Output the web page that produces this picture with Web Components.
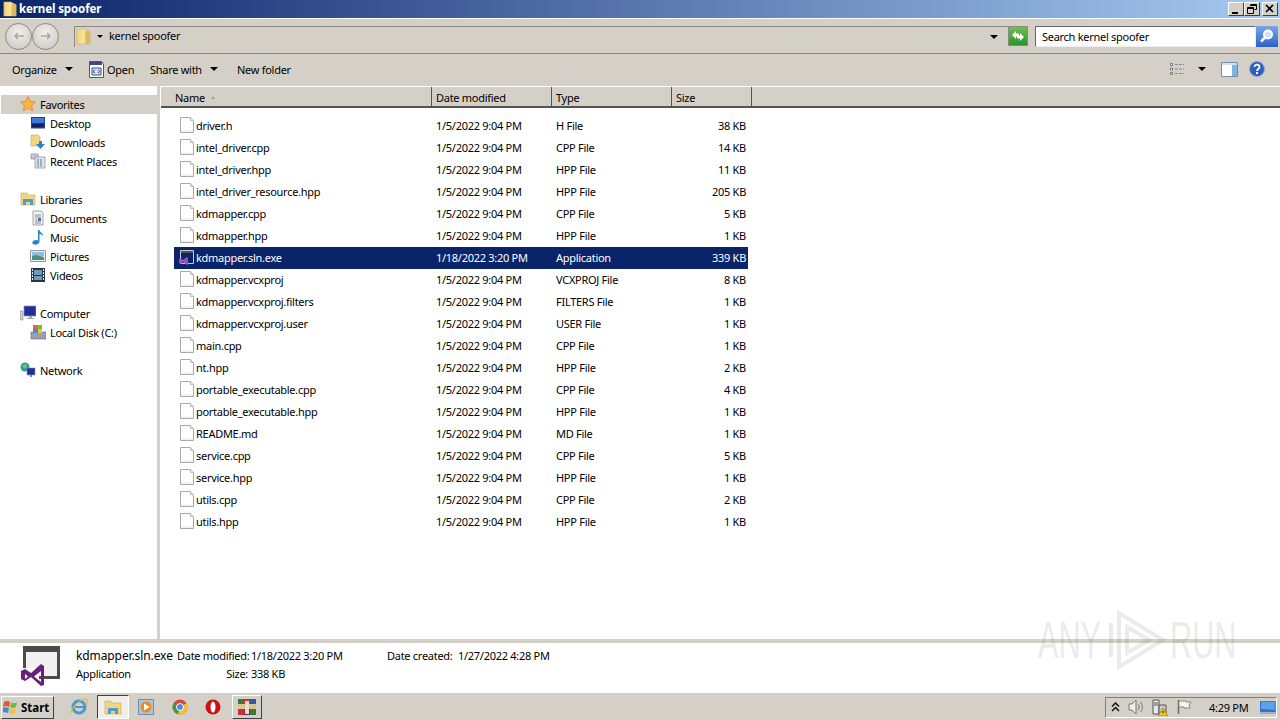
<!DOCTYPE html>
<html>
<head>
<meta charset="utf-8">
<title>kernel spoofer</title>
<style>
  html, body { margin: 0; height: 100%; overflow: hidden; }
  body { font: 11px "Noto Sans", sans-serif; color: #000; background: #fff; }
  win-explorer { width: 1280px; height: 720px; }
</style>
</head>
<body>
<svg width="0" height="0" style="position:absolute">
  <defs>
    <linearGradient id="fold" x1="0" x2="1"><stop offset="0" stop-color="#f0d070"/><stop offset=".5" stop-color="#f7e6a0"/><stop offset="1" stop-color="#d8b050"/></linearGradient>
    <symbol id="folder" viewBox="0 0 16 18">
      <path d="M1 1h8l6 3v13H1z" fill="url(#fold)" stroke="#d4b660" stroke-width=".6"/>
      <path d="M10 4l5 0v13h-5z" fill="#dcb95c"/>
    </symbol>
    <symbol id="doc" viewBox="0 0 16 16">
      <path d="M1.500 .5h10l3 3v12h-13z" fill="#fff" stroke="#a9a9a9"/>
      <path d="M11.500 .5v3h3" fill="#eee" stroke="#bdbdbd"/>
      <path d="M2 13.500h12v1.500H2z" fill="#f0f0f0"/>
    </symbol>
    <symbol id="vs" viewBox="0 0 40 40">
      <path d="M3 0h37v33H19v-3h18V6H6v16H3z" fill="#4b4b4b"/>
      <path d="M6 6h31v24H19V22H6z" fill="#f1f1f1"/>
      <path d="M1 25l4-2 6 4 10-9 3 2v19l-3 1-10-9-6 4-4-2zM5 28v5l3-2.500zM21 25l-7 5.500 7 5.500z" fill="#68217a" fill-rule="evenodd"/>
    </symbol>
  </defs>
</svg>

<win-explorer></win-explorer>

<script>
// every icon gets its own small svg, the symbols above are only reachable by copying them in
const defsHtml = document.querySelector("svg defs").outerHTML;
const useIcon = (id, w, h) =>
  `<svg width="${w}" height="${h || w}">${defsHtml}<use href="#${id}" width="${w}" height="${h || w}"/></svg>`;

const navIcons = {
  star: `<svg width="16" height="16" viewBox="0 0 16 16"><path d="M8 .5l2.300 4.800 5.200.7-3.800 3.600.9 5.200L8 12.300l-4.600 2.500.9-5.200L.5 6l5.200-.7z" fill="#f6b73c" stroke="#e8894a"/></svg>`,
  desktop: `<svg width="16" height="16" viewBox="0 0 16 16"><path d="M1 2h14v11H1z" fill="#1d3f9e"/><path d="M2 3h12v6L2 8z" fill="#3f78d8"/><path d="M2 9l12-1v4H2z" fill="#14235f"/><path d="M1 13h14v1H1z" fill="#9aa4b8"/></svg>`,
  downloads: `<svg width="16" height="16" viewBox="0 0 16 16"><path d="M1 1h7l2 2v9H1z" fill="#f0d67c" stroke="#c9a94c" stroke-width=".6"/><path d="M9 7h3v3h3l-4.500 5L6 10h3z" fill="#2f7fd0"/></svg>`,
  recent: `<svg width="16" height="16" viewBox="0 0 16 16"><path d="M1 1h7v5H1z" fill="#c5ced8" stroke="#7d8a98" stroke-width=".7"/><path d="M5 4h10v11H5z" fill="#dfe4ea" stroke="#7d8a98" stroke-width=".7"/><path d="M7 7h6M7 9h6M7 11h6M7 13h6" stroke="#5d7f9c" stroke-dasharray="2 1"/></svg>`,
  libraries: `<svg width="16" height="16" viewBox="0 0 16 16"><path d="M1 2h6l1 2h7v10H1z" fill="#efd67e" stroke="#c9a94c" stroke-width=".6"/><path d="M3 8h10v6h-3v-3H6v3H3z" fill="#4d9bd0"/></svg>`,
  documents: `<svg width="16" height="16" viewBox="0 0 16 16"><path d="M3 1h8l2 2v12H3z" fill="#f3f3f3" stroke="#8d8d8d" stroke-width=".8"/><path d="M5 5h6M5 7h6M5 9h2M5 11h6M5 13h6" stroke="#8a8a8a"/><path d="M8 8h3v3H8z" fill="#4c6f96"/></svg>`,
  music: `<svg width="16" height="16" viewBox="0 0 16 16"><path d="M8 1h1.500c.5 3 4 3 3.500 6-1-1.500-2.500-2-3.500-2v7.500C9.500 15 6.500 16 4 15.500 1.500 15 2 12 4.500 11.200c1.500-.4 2.500-.2 3.500.3z" fill="#2f7fd0"/></svg>`,
  pictures: `<svg width="16" height="16" viewBox="0 0 16 16"><path d="M.5 2.500h15v11H.5z" fill="#e8eef2" stroke="#8f9aa5"/><path d="M2 4h12v4H2z" fill="#8cc0e6"/><path d="M2 8l4-1 8 2v3H2z" fill="#4f8f78"/></svg>`,
  videos: `<svg width="16" height="16" viewBox="0 0 16 16"><path d="M1 1h14v14H1z" fill="#2d3540"/><path d="M4 3h8v10H4z" fill="#6f9cbc"/><path d="M2 2h1v2H2zM2 5h1v2H2zM2 8h1v2H2zM2 11h1v2H2zM13 2h1v2h-1zM13 5h1v2h-1zM13 8h1v2h-1zM13 11h1v2h-1z" fill="#e8e8e8"/><path d="M4 8h8v1H4z" fill="#2d3540"/></svg>`,
  computer: `<svg width="16" height="16" viewBox="0 0 16 16"><path d="M0 6h3v9H0z" fill="#c9ccd0" stroke="#7c7f85" stroke-width=".5"/><path d="M4 1h12v10H4z" fill="#1f2f9e" stroke="#8f97a5" stroke-width=".7"/><path d="M9 11h3v2h2v1H7v-1h2z" fill="#a5a9b0"/></svg>`,
  disk: `<svg width="16" height="16" viewBox="0 0 16 16"><path d="M1 8h15v7H1z" fill="#9aa1aa" stroke="#62676f" stroke-width=".6"/><path d="M3 1h5v7H3z" fill="#e86a33"/><path d="M8 1h4v4H8z" fill="#7cb83c"/><path d="M3 5h5v4H3z" fill="#3a8ee0"/><path d="M8 5h4v4H8z" fill="#f3c534"/></svg>`,
  network: `<svg width="16" height="16" viewBox="0 0 16 16"><circle cx="5" cy="5" r="4.500" fill="#2a9c9c"/><path d="M2 3l4-1 1 3-3 2z" fill="#7cc06a"/><path d="M7 6h8v7H7z" fill="#1f2fa0" stroke="#8f97a5" stroke-width=".6"/><path d="M10 13h2v2h-2z" fill="#7d8a98"/></svg>`
};

const trayAndTaskIcons = {
  start: `<svg width="17" height="16" viewBox="0 0 17 16"><path d="M1 3c2-1.500 4-1.500 6 0L6 8C4 6.800 2.500 6.800 0 8z" fill="#e2582b"/><path d="M8 3.500c2 1 4 1 6-.5l-1 5c-2 1.300-4 1.300-6 .2z" fill="#7cb83c"/><path d="M0 9c2-1 4-1 6 0l-1 5c-2-1-4-1-6 0z" fill="#3a8ee0"/><path d="M7 9.500c2 1 4 1 6 0l-1 5c-2 1-4 1-6 0z" fill="#f3c534"/></svg>`,
  ie: `<svg width="18" height="18" viewBox="0 0 18 18"><circle cx="9" cy="9" r="6" fill="none" stroke="#3f9ad8" stroke-width="3"/><path d="M5 9h9" stroke="#3f9ad8" stroke-width="2"/><path d="M1 15C2 9 9 2 16 1c2 1 1 4 0 6" fill="none" stroke="#e8b23c" stroke-width="1.200"/></svg>`,
  explorer: `<svg width="18" height="16" viewBox="0 0 18 16"><path d="M1 2h6l1 2h9v11H1z" fill="#efd67e" stroke="#c9a94c" stroke-width=".6"/><path d="M4 9h10v6h-3v-3H7v3H4z" fill="#4d9bd0"/></svg>`,
  media: `<svg width="16" height="16" viewBox="0 0 16 16"><path d="M.5.500h15v15H.5z" fill="#a8c4de" stroke="#6c8fb3"/><circle cx="8" cy="8" r="5.500" fill="#f08a1c"/><path d="M6 4.500L11.500 8 6 11.500z" fill="#fff"/></svg>`,
  chrome: `<svg width="16" height="16" viewBox="0 0 16 16"><circle cx="8" cy="8" r="7.500" fill="#d9493b"/><path d="M8 8L1.500 4.300A7.500 7.500 0 0 0 6 15.200z" fill="#3f9b4a"/><path d="M8 8l-2 7.200A7.500 7.500 0 0 0 15.500 8 7 7 0 0 0 14.500 4.300z" fill="#f2c230"/><circle cx="8" cy="8" r="3.500" fill="#4a8ae8" stroke="#fff"/></svg>`,
  opera: `<svg width="16" height="16" viewBox="0 0 16 16"><ellipse cx="8" cy="8" rx="7.500" ry="7.500" fill="#cc0f16"/><ellipse cx="8" cy="8" rx="2.500" ry="5.500" fill="#fff"/></svg>`,
  rar: `<svg width="20" height="18" viewBox="0 0 20 18"><path d="M1 1h18v16H1z" fill="#7a2070"/><path d="M1 1h6v5H1z" fill="#3a7a3c"/><path d="M7 1h6v5H7z" fill="#c4362e"/><path d="M13 1h6v5h-6z" fill="#3456a8"/><path d="M1 11h6v6H1z" fill="#c4362e"/><path d="M13 11h6v6h-6z" fill="#3a7a3c"/><path d="M1 6h18v5H1z" fill="#d8c890"/><path d="M8 3h4v13H8z" fill="#e8e0c0"/></svg>`,
  chevrons: `<svg width="9" height="10" viewBox="0 0 9 10"><path d="M1 4.500L4.500 1 8 4.500M1 9L4.500 5.500 8 9" fill="none" stroke="#111" stroke-width="1.500"/></svg>`,
  speaker: `<svg width="17" height="16" viewBox="0 0 17 16"><path d="M1 5h3l4-4v14l-4-4H1z" fill="#eee" stroke="#777"/><path d="M10 5c1.500 2 1.500 4 0 6M12.500 3c2.500 3 2.500 7 0 10" fill="none" stroke="#777"/></svg>`,
  power: `<svg width="16" height="17" viewBox="0 0 16 17"><path d="M1 1h6v14H1z" fill="#e8e8e8" stroke="#555"/><path d="M3 3v4M5 3v4" stroke="#555"/><path d="M7 6h7v9H7z" fill="#c8ccd0" stroke="#555"/><path d="M11 9l5 8H6z" fill="#f5c518" stroke="#8a6d00" stroke-width=".6"/><path d="M11 12v2" stroke="#000"/></svg>`,
  flag: `<svg width="16" height="16" viewBox="0 0 16 16"><path d="M2.500 1v14" stroke="#666" stroke-width="1.400"/><path d="M3 2h7v1h5l-2 3 1 3H8V8H3z" fill="#f4f4f4" stroke="#888"/></svg>`,
  desktopBtn: `<svg width="16" height="13" viewBox="0 0 16 13"><path d="M0 0h16v13H0z" fill="#2f6fd0"/><path d="M1 1h14v8L1 8z" fill="#5aa2ea"/><path d="M0 11h16v2H0z" fill="#a8b4c0"/></svg>`
};

class WinTitlebar extends HTMLElement {
  constructor() {
    super();
    this.attachShadow({ mode: "open" });
    this.shadowRoot.innerHTML = `
    <style>
      :host { display: flex; align-items: center; height: 18px; background: linear-gradient(90deg, #0a246a, #a6caf0); }
      .ico { margin: 0 2px 0 3px; display: flex; }
      .name { flex: 1; color: #fff; font: bold 11.500px "Noto Sans", sans-serif; letter-spacing: -.1px; padding-bottom: 2px; }
      .btns { display: flex; margin-right: 2px; }
      .btn { width: 16px; height: 14px; background: #d4d0c8; box-sizing: border-box; border: 1px solid; border-color: #fff #404040 #404040 #fff; display: flex; align-items: center; justify-content: center; }
      .btn.close { margin-left: 2px; }
    </style>
    <div class="ico">${useIcon("folder", 14, 16)}</div>
    <div class="name"><slot></slot></div>
    <div class="btns">
      <div class="btn"><svg width="10" height="10"><path d="M1 8h6v2H1z"/></svg></div>
      <div class="btn"><svg width="10" height="10"><path d="M3.500.5h6v5h-2M.5 3.500h6v6h-6z M3 1.500h6M1 4.500h5" fill="none" stroke="#000"/></svg></div>
      <div class="btn close"><svg width="10" height="10"><path d="M1 1l7 7M8 1L1 8" stroke="#000" stroke-width="1.600"/></svg></div>
    </div>`;
  }
}

class WinAddressbar extends HTMLElement {
  constructor() {
    super();
    this.attachShadow({ mode: "open" });
    this.shadowRoot.innerHTML = `
    <style>
      :host { display: flex; align-items: center; height: 36px; box-sizing: border-box; background: #d4d0c8; border-top: 1px solid #fff; border-bottom: 1px solid #88857c; padding: 0 2px 0 5px; }
      .nav { display: flex; }
      .round { width: 27px; height: 27px; box-sizing: border-box; border-radius: 50%; border: 1px solid #8a8880; background: radial-gradient(circle at 50% 35%, #f2f0ec, #c8c5bd); display: flex; align-items: center; justify-content: center; }
      .path { flex: 1; margin-left: 15px; height: 21px; display: flex; align-items: center; background: #d4d0c8; border-left: 1px solid #8a8880; border-top: 1px solid #8a8880; box-sizing: border-box; }
      .path .f { margin: 0 6px 0 1px; display: flex; }
      .caret { width: 0; height: 0; border: 3px solid transparent; border-top: 3px solid #000; border-bottom: 0; }
      .text { margin-left: 6px; flex: 1; padding-bottom: 3px; }
      .drop { width: 0; height: 0; border: 4px solid transparent; border-top: 4px solid #000; border-bottom: 0; margin-right: 10px; }
      .go { width: 20px; height: 20px; box-sizing: border-box; background: linear-gradient(#6cc04e, #2f9130); border: 1px solid #8a8880; display: flex; align-items: center; justify-content: center; margin-right: 7px; }
      .search { width: 221px; height: 21px; box-sizing: border-box; background: #fff; border: 1px solid; border-color: #666 #eee #eee #666; padding-left: 6px; line-height: 19px; }
      .mag { width: 22px; height: 21px; background: linear-gradient(#7da4ea, #2b62c8); display: flex; align-items: center; justify-content: center; }
    </style>
    <div class="nav">
      <div class="round"><svg width="12" height="10"><path d="M11 5H2M5 2L2 5l3 3" fill="none" stroke="#aaa79f" stroke-width="1.500"/></svg></div>
      <div class="round"><svg width="12" height="10"><path d="M1 5h9M7 2l3 3-3 3" fill="none" stroke="#aaa79f" stroke-width="1.500"/></svg></div>
    </div>
    <div class="path">
      <div class="f">${useIcon("folder", 15, 17)}</div>
      <div class="caret"></div>
      <div class="text"><slot></slot></div>
      <div class="drop"></div>
    </div>
    <div class="go"><svg width="14" height="12"><path d="M1 5l4-4v2.500h3v3H5V9zM13 7l-4 4V8.500H6v-3h3V3z" fill="#fff"/></svg></div>
    <div class="search"><slot name="search"></slot></div>
    <div class="mag"><svg width="16" height="16"><circle cx="9" cy="6.500" r="4" fill="#cfe0fa" stroke="#fff" stroke-width="2"/><path d="M6 9.500l-4 4" stroke="#fff" stroke-width="2.500"/></svg></div>`;
  }
}

class WinCommandbar extends HTMLElement {
  constructor() {
    super();
    this.attachShadow({ mode: "open" });
    this.shadowRoot.innerHTML = `
    <style>
      :host { display: flex; align-items: center; height: 32px; background: #d4d0c8; padding: 0 0 2px 12px; box-sizing: border-box; }
      .item { display: flex; align-items: center; }
      .caret { width: 0; height: 0; border: 4px solid transparent; border-top: 4px solid #000; border-bottom: 0; }
      .organize { width: 77px; } .organize .caret { margin-left: 8px; }
      .open { width: 61px; } .open svg { margin-right: 3px; }
      .share { width: 87px; } .share .caret { margin-left: 8px; }
      .grow { flex: 1; }
      .views { margin-right: 13px; display: flex; }
      .vc { margin-right: 15px; }
      .pane { margin-right: 11px; display: flex; }
      .help { margin-right: 15px; display: flex; }
    </style>
    <div class="item organize">Organize<span class="caret"></span></div>
    <div class="item open">
      <svg width="15" height="17" viewBox="0 0 15 17"><path d="M.5.500h12l2 2v14H.5z" fill="#fff" stroke="#555"/><path d="M1 1h12v3H1z" fill="#3c4a90"/><path d="M3 7h9v7H3z" fill="#d8dde8" stroke="#3c4a90"/><path d="M6 9l-2 1.500L6 12M9 9l2 1.500L9 12" fill="none" stroke="#3c4a90"/></svg>
      Open
    </div>
    <div class="item share">Share with<span class="caret"></span></div>
    <div class="item">New folder</div>
    <div class="grow"></div>
    <div class="views"><svg width="16" height="14" viewBox="0 0 16 14"><path d="M1.500 1.500h2v2h-2zM1.500 6h2v2h-2zM1.500 10.500h2v2h-2z" fill="#fff" stroke="#777"/><path d="M6 2.500h9M6 7h9M6 11.500h9" stroke="#8a8a8a" stroke-dasharray="3 1"/></svg></div>
    <div class="caret vc"></div>
    <div class="pane"><svg width="17" height="15" viewBox="0 0 17 15"><path d="M.5.500h16v14H.5z" fill="#fff" stroke="#6d8fb0"/><path d="M11 1h5v13h-5z" fill="#7fb4dc"/><path d="M1 1h15v2H1z" fill="#cfe0ee"/></svg></div>
    <div class="help"><svg width="16" height="16" viewBox="0 0 16 16"><circle cx="8" cy="8" r="7.500" fill="#2f5fb8" stroke="#8aa4d4"/><path d="M5.500 6c0-3.500 5.500-3 5 .2C10.300 8 8 8 8 10" fill="none" stroke="#fff" stroke-width="1.800"/><path d="M7 11h2v2H7z" fill="#fff"/></svg></div>`;
  }
}

class NavItem extends HTMLElement {
  constructor() {
    super();
    this.attachShadow({ mode: "open" });
    this.shadowRoot.innerHTML = `
    <style>
      :host { display: flex; align-items: center; height: 19px; box-sizing: border-box; padding: 0 0 1px 30px; }
      :host([top]) { padding-left: 20px; }
      :host([on]) { background: #d4d0c8; margin-left: 1px; padding-left: 19px; }
      .i { width: 16px; height: 16px; margin-right: 4px; display: flex; }
    </style>
    <div class="i"></div><slot></slot>`;
  }
  connectedCallback() {
    this.shadowRoot.querySelector(".i").innerHTML = navIcons[this.getAttribute("icon")] || "";
  }
}

class NavPane extends HTMLElement {
  constructor() {
    super();
    this.attachShadow({ mode: "open" });
    this.shadowRoot.innerHTML = `
    <style>
      :host { display: block; width: 157px; background: #fff; padding-top: 9px; box-sizing: border-box; }
    </style>
    <slot></slot>`;
  }
}

class ColHead extends HTMLElement {
  constructor() {
    super();
    this.attachShadow({ mode: "open" });
    this.shadowRoot.innerHTML = `
    <style>
      :host { display: flex; align-items: center; box-sizing: border-box; height: 100%; padding: 2px 0 0 4px; border-right: 1px solid #55534e; }
      :host([first]) { padding-left: 14px; }
      .sort { margin-left: 6px; width: 0; height: 0; border: 2.500px solid transparent; border-bottom: 3px solid #a8a59c; border-top: 0; display: none; }
      :host([sorted]) .sort { display: block; }
    </style>
    <slot></slot><span class="sort"></span>`;
  }
}

class FileRow extends HTMLElement {
  constructor() {
    super();
    this.attachShadow({ mode: "open" });
    this.shadowRoot.innerHTML = `
    <style>
      :host { display: grid; grid-template-columns: 262px 120px 120px 70px; width: 574px; height: 22px; margin-left: 13px; align-items: center; color: #000; padding: 0 4px 2px 0; box-sizing: border-box; }
      :host([selected]) { background: #0a246a; color: #fff; }
      .name { display: flex; align-items: center; }
      .i { width: 16px; height: 16px; margin: 0 1px 0 5px; display: flex; }
      .size { text-align: right; }
    </style>
    <div class="name"><div class="i"></div><span id="n"></span></div>
    <div id="d"></div><div id="t"></div><div id="s" class="size"></div>`;
  }
  connectedCallback() {
    const root = this.shadowRoot;
    root.getElementById("n").textContent = this.getAttribute("name");
    root.getElementById("d").textContent = this.getAttribute("date");
    root.getElementById("t").textContent = this.getAttribute("type");
    root.getElementById("s").textContent = this.getAttribute("size");
    root.querySelector(".i").innerHTML = this.hasAttribute("selected")
      ? `<svg width="16" height="16" viewBox="0 0 16 16"><path d="M1.500 1.500h13v13h-13z" fill="#0a246a" stroke="#c8c8c8"/><path d="M2 2h12v2H2z" fill="#555"/><path d="M0 10l2-1 2 2 4-3 1 1v6l-1 1-4-3-2 2-2-1z" fill="#a04fc0"/></svg>`
      : useIcon("doc", 16);
  }
}

const files = [
  ["driver.h", "H File", "38 KB"],
  ["intel_driver.cpp", "CPP File", "14 KB"],
  ["intel_driver.hpp", "HPP File", "11 KB"],
  ["intel_driver_resource.hpp", "HPP File", "205 KB"],
  ["kdmapper.cpp", "CPP File", "5 KB"],
  ["kdmapper.hpp", "HPP File", "1 KB"],
  ["kdmapper.sln.exe", "Application", "339 KB", "1/18/2022 3:20 PM"],
  ["kdmapper.vcxproj", "VCXPROJ File", "8 KB"],
  ["kdmapper.vcxproj.filters", "FILTERS File", "1 KB"],
  ["kdmapper.vcxproj.user", "USER File", "1 KB"],
  ["main.cpp", "CPP File", "1 KB"],
  ["nt.hpp", "HPP File", "2 KB"],
  ["portable_executable.cpp", "CPP File", "4 KB"],
  ["portable_executable.hpp", "HPP File", "1 KB"],
  ["README.md", "MD File", "1 KB"],
  ["service.cpp", "CPP File", "5 KB"],
  ["service.hpp", "HPP File", "1 KB"],
  ["utils.cpp", "CPP File", "2 KB"],
  ["utils.hpp", "HPP File", "1 KB"]
];

class FileList extends HTMLElement {
  constructor() {
    super();
    this.attachShadow({ mode: "open" });
    const rows = files.map(f =>
      `<file-row name="${f[0]}" type="${f[1]}" size="${f[2]}" date="${f[3] || "1/5/2022 9:04 PM"}"${f[3] ? " selected" : ""}></file-row>`
    ).join("");
    this.shadowRoot.innerHTML = `
    <style>
      :host { display: block; flex: 1; background: #fff; border-left: 1px solid #fff; }
      .head { display: grid; grid-template-columns: 271px 120px 120px 80px 1fr; height: 22px; background: #d4d0c8; border-top: 1px solid #fff; border-bottom: 2px solid #55534e; box-sizing: border-box; }
      .rows { padding-top: 7px; }
    </style>
    <div class="head">
      <col-head first sorted>Name</col-head>
      <col-head>Date modified</col-head>
      <col-head>Type</col-head>
      <col-head>Size</col-head>
      <div></div>
    </div>
    <div class="rows">${rows}</div>`;
  }
}

class DetailsPane extends HTMLElement {
  constructor() {
    super();
    this.attachShadow({ mode: "open" });
    this.shadowRoot.innerHTML = `
    <style>
      :host { display: flex; height: 49px; box-sizing: border-box; background: #fff; padding: 3px 0 0 20px; }
      .big { width: 40px; height: 40px; margin-right: 16px; }
      .info { display: grid; grid-template-columns: 101px 74px 136px 71px 1fr; grid-auto-rows: 19px 16px; align-items: center; flex: 1; }
      .name { font-size: 12px; letter-spacing: -.1px; }
      .k { white-space: nowrap; }
      .r { text-align: right; padding-right: 3px; }
    </style>
    <div class="big">${useIcon("vs", 40)}</div>
    <div class="info">
      <div class="name">kdmapper.sln.exe</div>
      <div class="k">Date modified:</div><div>1/18/2022 3:20 PM</div>
      <div class="k">Date created:</div><div>1/27/2022 4:28 PM</div>
      <div>Application</div>
      <div class="k r">Size:</div><div>338 KB</div>
    </div>`;
  }
}

class WinTaskbar extends HTMLElement {
  constructor() {
    super();
    this.attachShadow({ mode: "open" });
    const t = trayAndTaskIcons;
    this.shadowRoot.innerHTML = `
    <style>
      :host { display: flex; align-items: center; height: 28px; box-sizing: border-box; background: #d4d0c8; border-top: 1px solid #fff; padding: 1px 3px 0 1px; }
      .start { width: 53px; height: 23px; box-sizing: border-box; border: 1px solid; border-color: #fff #404040 #404040 #fff; display: flex; align-items: center; padding-left: 1px; font: bold 11.500px "Noto Sans", sans-serif; letter-spacing: 0; }
      .start svg { margin-right: 1px; }
      .apps { display: flex; margin-left: 8px; flex: 1; align-items: center; }
      .slot { width: 33.500px; height: 24px; display: flex; align-items: center; justify-content: center; box-sizing: border-box; }
      .slot.on { background: #f0eee8; border: 1px solid; border-color: #404040 #fff #fff #404040; width: 32px; margin: 0 1px; }
      .slot.rar { width: 30px; border: 1px solid; border-color: #fff #404040 #404040 #fff; margin-left: 2px; }
      .tray { width: 172px; height: 21px; box-sizing: border-box; border: 1px solid; border-color: #808080 #fff #fff #808080; display: flex; align-items: center; padding-left: 5px; }
      .tray svg { display: block; }
      .chev { margin-right: 8px; } .spk { margin-right: 7px; } .pwr { margin-right: 8px; } .flg { margin-right: 17px; }
      .time { width: 52px; }
    </style>
    <div class="start">${t.start}Start</div>
    <div class="apps">
      <div class="slot">${t.ie}</div>
      <div class="slot on">${t.explorer}</div>
      <div class="slot">${t.media}</div>
      <div class="slot">${t.chrome}</div>
      <div class="slot">${t.opera}</div>
      <div class="slot rar">${t.rar}</div>
    </div>
    <div class="tray">
      <span class="chev">${t.chevrons}</span>
      <span class="spk">${t.speaker}</span>
      <span class="pwr">${t.power}</span>
      <span class="flg">${t.flag}</span>
      <span class="time">4:29 PM</span>
      ${t.desktopBtn}
    </div>`;
  }
}

class AnyrunMark extends HTMLElement {
  constructor() {
    super();
    this.attachShadow({ mode: "open" });
    this.shadowRoot.innerHTML = `
    <style>
      :host { position: absolute; left: 1038px; top: 609px; width: 194px; height: 62px; display: flex; align-items: center; opacity: .12; color: #666; font: 52px/62px "Liberation Sans", sans-serif; letter-spacing: 0; pointer-events: none; }
      span { display: block; width: 62px; white-space: nowrap; transform: scaleX(.59); transform-origin: left; }
      svg { margin: 0 4px 0 8px; flex: none; }
    </style>
    <span>ANY</span>
    <svg width="58" height="62" viewBox="0 0 58 62"><path d="M3 14v34M11 4v54l44-27zM19 18v26l22-13z" fill="none" stroke="#666" stroke-width="4"/></svg>
    <span>RUN</span>`;
  }
}

class WinExplorer extends HTMLElement {
  constructor() {
    super();
    this.attachShadow({ mode: "open" });
    const navRows = [
      ["star", "Favorites", "top on"], ["desktop", "Desktop"], ["downloads", "Downloads"], ["recent", "Recent Places"], null,
      ["libraries", "Libraries", "top"], ["documents", "Documents"], ["music", "Music"], ["pictures", "Pictures"], ["videos", "Videos"], null,
      ["computer", "Computer", "top"], ["disk", "Local Disk (C:)"], null,
      ["network", "Network", "top"]
    ].map(r => r ? `<nav-item icon="${r[0]}" ${r[2] || ""}>${r[1]}</nav-item>` : `<div class="gap"></div>`).join("");
    this.shadowRoot.innerHTML = `
    <style>
      :host { display: flex; flex-direction: column; position: relative; overflow: hidden; font: 11px "Noto Sans", sans-serif; letter-spacing: -.28px; }
      .main { flex: 1; display: flex; min-height: 0; }
      .split { width: 3px; background: #d4d0c8; }
      .gap { height: 19px; }
      .hbar { height: 4px; background: #d4d0c8; }
    </style>
    <win-titlebar>kernel spoofer</win-titlebar>
    <win-addressbar>kernel spoofer<span slot="search">Search kernel spoofer</span></win-addressbar>
    <win-commandbar></win-commandbar>
    <div class="main">
      <nav-pane>${navRows}</nav-pane>
      <div class="split"></div>
      <file-list></file-list>
    </div>
    <div class="hbar"></div>
    <details-pane></details-pane>
    <win-taskbar></win-taskbar>
    <anyrun-mark></anyrun-mark>`;
  }
}

customElements.define("win-titlebar", WinTitlebar);
customElements.define("win-addressbar", WinAddressbar);
customElements.define("win-commandbar", WinCommandbar);
customElements.define("nav-item", NavItem);
customElements.define("nav-pane", NavPane);
customElements.define("col-head", ColHead);
customElements.define("file-row", FileRow);
customElements.define("file-list", FileList);
customElements.define("details-pane", DetailsPane);
customElements.define("win-taskbar", WinTaskbar);
customElements.define("anyrun-mark", AnyrunMark);
customElements.define("win-explorer", WinExplorer);
</script>
</body>
</html>
